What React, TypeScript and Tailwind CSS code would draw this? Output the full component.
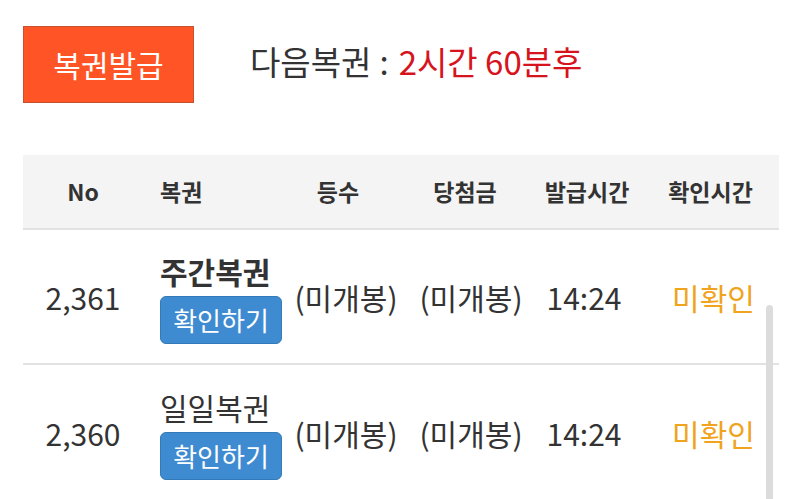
const font = { fontFamily: '"Noto Sans CJK KR", "Noto Sans", sans-serif' }

type Ticket = {
  no: string
  name: string
  bold: boolean
  rank: string
  prize: string
  issued: string
  checked: string
}

const tickets: Ticket[] = [
  { no: '2,361', name: '주간복권', bold: true, rank: '(미개봉)', prize: '(미개봉)', issued: '14:24', checked: '미확인' },
  { no: '2,360', name: '일일복권', bold: false, rank: '(미개봉)', prize: '(미개봉)', issued: '14:24', checked: '미확인' },
]

const cols = 'grid grid-cols-[120px_137px_120px_134px_106px_139px]'

export default function App() {
  return (
    <div className="relative w-[800px] h-[499px] overflow-hidden bg-white text-[#333]" style={font}>
      {/* 상단 */}
      <div className="flex items-center pl-[23px] pt-[26px]">
        <button className="w-[171px] h-[77px] bg-[#ff5526] border border-[#c9502e] text-white text-[30px] leading-none pb-[1px]">
          복권발급
        </button>
        <div className="ml-[56px] flex items-center text-[33px] leading-none -mt-[6px]">
          <span>다음복권</span>
          <span className="ml-[8px] mr-[10px]">:</span>
          <span className="text-[#d7141d]">2시간 60분후</span>
        </div>
      </div>

      {/* 테이블 */}
      <div className="ml-[23px] mt-[52px] w-[756px]">
        <div className={`${cols} h-[75px] items-center bg-[#f4f4f4] border-b-2 border-[#e2e2e2] text-[23px] font-bold leading-none`}>
          <div className="text-center">No</div>
          <div className="pl-[17px]">복권</div>
          <div className="text-center pr-[4px]">등수</div>
          <div className="text-center pr-[4px]">당첨금</div>
          <div className="text-center">발급시간</div>
          <div className="text-center pl-[2px]">확인시간</div>
        </div>

        {tickets.map((t, i) => (
          <div
            key={t.no}
            className={`${cols} h-[135px] items-center text-[30px] leading-none ${i === 0 ? 'border-b-2 border-[#e2e2e2]' : ''}`}
          >
            <div className="text-center">{t.no}</div>
            <div className="pl-[17px] flex flex-col items-start gap-[10px] mt-[6px]">
              <span className={t.bold ? 'font-bold' : ''}>{t.name}</span>
              <span className="w-[122px] h-[48px] rounded-[6px] bg-[#3e8bd1] border border-[#3479b8] text-white text-[26px] flex items-center justify-center">
                확인하기
              </span>
            </div>
            <div className="text-center pl-[12px]">{t.rank}</div>
            <div className="text-center pl-[8px]">{t.prize}</div>
            <div className="text-center pr-[6px]">{t.issued}</div>
            <div className="text-center pl-[8px] text-[#f0a31c]">{t.checked}</div>
          </div>
        ))}
      </div>

      {/* 스크롤바 */}
      <div className="absolute left-[766px] top-[305px] w-[7px] h-[200px] rounded-full bg-[#dcdcdc]" />
    </div>
  )
}
